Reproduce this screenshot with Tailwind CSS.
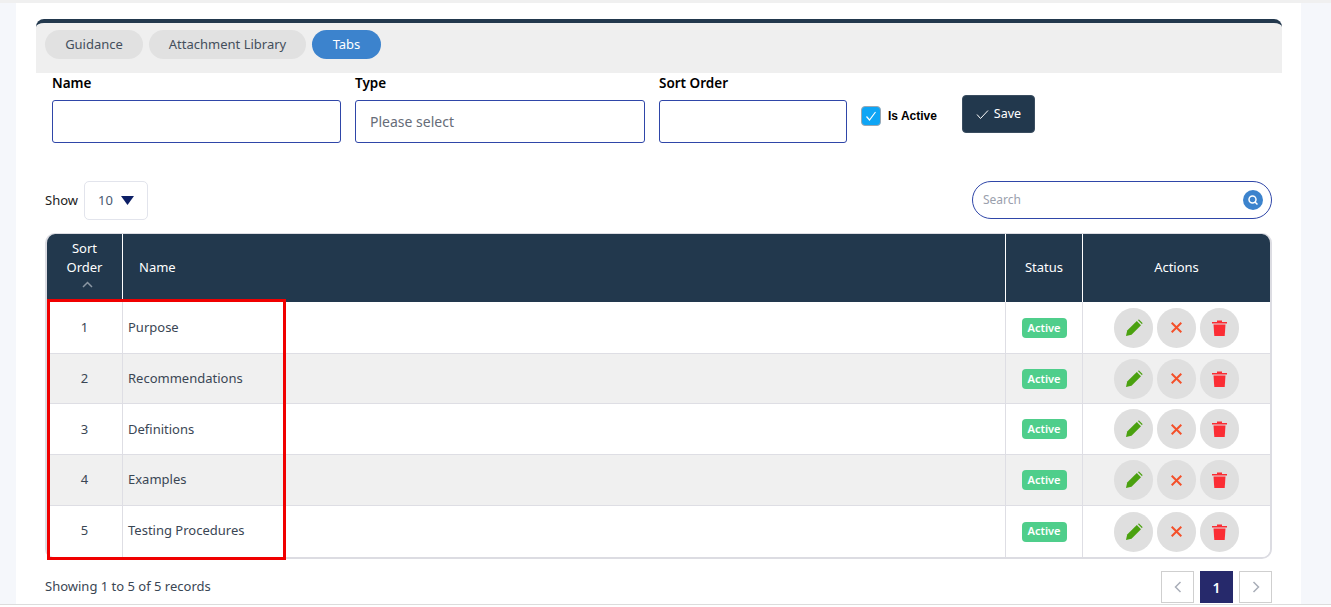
<!DOCTYPE html>
<html>
<head>
<meta charset="utf-8">
<script src="https://cdn.jsdelivr.net/npm/@tailwindcss/browser@4"></script>
</head>
<body class="w-[1331px] h-[607px] overflow-hidden bg-[#f5f7fb] font-['Noto_Sans','Open_Sans',sans-serif]">
<div class="h-[3px] bg-[#f0f0f0]"></div>
<main class="relative ml-4 w-[1285px] h-[601px] bg-white pt-4 border-b-0">
  <section class="mx-5 w-[1246px] h-[54px] bg-[#efefef] border-t-4 border-[#22384d] rounded-t-[8px] pt-[7px] pl-[9px] flex gap-[6px]">
    <button class="h-[29px] w-[98px] rounded-full bg-[#e1e1e1] text-[#444f5c] text-[13px]">Guidance</button>
    <button class="h-[29px] w-[157px] rounded-full bg-[#e1e1e1] text-[#444f5c] text-[13px]">Attachment Library</button>
    <button class="h-[29px] w-[69px] rounded-full bg-[#3c83cd] text-white text-[13px]">Tabs</button>
  </section>

  <form class="ml-9 flex items-start h-[108px]">
    <div class="w-[289px] mr-[14px]">
      <div class="h-[27px] text-[13.5px] leading-[20px] font-semibold text-black">Name</div>
      <div class="h-[43px] border border-[#2f46a8] rounded-[3px] bg-white"></div>
    </div>
    <div class="w-[290px] mr-[14px]">
      <div class="h-[27px] text-[13.5px] leading-[20px] font-semibold text-black">Type</div>
      <div class="h-[43px] border border-[#2f46a8] rounded-[3px] bg-white pl-[14px] flex items-center text-[14px] text-[#666c78]">Please select</div>
    </div>
    <div class="w-[188px] mr-[14px]">
      <div class="h-[27px] text-[13.5px] leading-[20px] font-semibold text-black">Sort Order</div>
      <div class="h-[43px] border border-[#2f46a8] rounded-[3px] bg-white"></div>
    </div>
    <div class="flex items-center mt-[33px]">
      <div class="w-5 h-5 rounded-[4px] bg-[#0ea5f5] border border-[#9aa7b3] flex items-center justify-center">
        <svg width="12" height="12" viewBox="0 0 12 12" fill="none" stroke="white" stroke-width="1.2"><path d="M1.5 6.5 4.5 10 10.5 2"/></svg>
      </div>
      <span class="ml-[7px] font-['Liberation_Sans',sans-serif] text-[12px] font-bold text-black">Is Active</span>
    </div>
    <button type="button" class="ml-[25px] mt-[22px] w-[73px] h-[38px] rounded-[4px] bg-[#22384d] border border-[#3a4d60] text-white text-[12.5px] flex items-center justify-center gap-[5px]">
      <svg width="13" height="11" viewBox="0 0 13 11" fill="none" stroke="white" stroke-width="1"><path d="M1 5.5 4.5 9.5 12 1.5"/></svg>
      Save
    </button>
  </form>

  <div class="ml-[29px] w-[1227px] flex items-start justify-between h-[39px]">
    <div class="flex items-center text-[13px] text-[#222]">
      <span>Show</span>
      <div class="ml-[6px] w-16 h-[39px] border border-[#e2e4ec] rounded-[5px] flex items-center pl-[13px] text-[#4a5a70]">
        <span>10</span>
        <svg class="ml-2" width="13" height="9" viewBox="0 0 13 9"><path d="M0 0H13L6.5 9Z" fill="#0d1f66"/></svg>
      </div>
    </div>
    <div class="w-[300px] h-[38px] border border-[#2f46a8] rounded-full flex items-center justify-between pl-[10px] pr-[8px] text-[12px] text-[#9aa0ad]">
      <span>Search</span>
      <span class="w-5 h-5 rounded-full bg-[#3c83cd] flex items-center justify-center">
        <svg width="12" height="12" viewBox="0 0 12 12" fill="none" stroke="white" stroke-width="1.5"><circle cx="5.5" cy="5.5" r="3.5"/><path d="M8 8 10.5 10.5"/></svg>
      </span>
    </div>
  </div>

  <div class="ml-[29px] mt-[13px] w-[1227px] h-[326px] rounded-[10px] overflow-hidden border-2 border-t border-[#dcdce2] text-[13px] text-[#3a4654]">
    <div class="grid grid-cols-[76px_883px_77px_1fr] h-[68px] bg-[#22384d] text-white">
      <div class="border-r border-white flex flex-col items-center pt-[5px] leading-[19px]">
        <span>Sort</span><span>Order</span>
        <svg class="mt-[4px] ml-[6px]" width="11" height="7" viewBox="0 0 11 7" fill="none" stroke="#8b97a3" stroke-width="1.5"><path d="M1 6 5.5 1.5 10 6"/></svg>
      </div>
      <div class="border-r border-white flex items-center pl-4">Name</div>
      <div class="border-r border-white flex items-center justify-center">Status</div>
      <div class="flex items-center justify-center">Actions</div>
    </div>

    <div class="grid grid-cols-[76px_883px_77px_1fr] h-[52px] bg-white border-b border-[#dedee4]">
      <div class="border-r border-[#dedee4] flex items-center justify-center">1</div>
      <div class="border-r border-[#dedee4] flex items-center pl-[5px]">Purpose</div>
      <div class="border-r border-[#dedee4] flex items-center justify-center"><span class="w-[45px] h-5 pt-[1px] rounded-[4px] bg-[#4fce8b] text-white text-[11px] font-semibold flex items-center justify-center">Active</span></div>
      <div class="flex items-center justify-center gap-1">
        <button class="w-[39px] h-10 rounded-full bg-[#dfdfdf] flex items-center justify-center"><svg width="18" height="18" viewBox="0 0 18 18"><path d="M1 17 2.2 11.5 11.8 2 16 6.2 6.5 15.8Z" fill="#4aa10f"/><path d="M12.8 1 14 .5 17.5 4 17 5.2Z" fill="#4aa10f"/></svg></button>
        <button class="w-[39px] h-10 rounded-full bg-[#dfdfdf] flex items-center justify-center"><svg width="11" height="11" viewBox="0 0 11 11" stroke="#f4502a" stroke-width="2"><path d="M.7.7 10.3 10.3M10.3.7.7 10.3"/></svg></button>
        <button class="w-[39px] h-10 rounded-full bg-[#dfdfdf] flex items-center justify-center"><svg width="15" height="16" viewBox="0 0 15 16" fill="#fb2d34"><path d="M1.5 4.5H13.5L12.7 16H2.3Z"/><path d="M0 2H5V.5H10V2H15V3.4H0Z"/></svg></button>
      </div>
    </div>
    <div class="grid grid-cols-[76px_883px_77px_1fr] h-[50px] bg-[#f0f0f0] border-b border-[#dedee4]">
      <div class="border-r border-[#dedee4] flex items-center justify-center">2</div>
      <div class="border-r border-[#dedee4] flex items-center pl-[5px]">Recommendations</div>
      <div class="border-r border-[#dedee4] flex items-center justify-center"><span class="w-[45px] h-5 pt-[1px] rounded-[4px] bg-[#4fce8b] text-white text-[11px] font-semibold flex items-center justify-center">Active</span></div>
      <div class="flex items-center justify-center gap-1">
        <button class="w-[39px] h-10 rounded-full bg-[#dfdfdf] flex items-center justify-center"><svg width="18" height="18" viewBox="0 0 18 18"><path d="M1 17 2.2 11.5 11.8 2 16 6.2 6.5 15.8Z" fill="#4aa10f"/><path d="M12.8 1 14 .5 17.5 4 17 5.2Z" fill="#4aa10f"/></svg></button>
        <button class="w-[39px] h-10 rounded-full bg-[#dfdfdf] flex items-center justify-center"><svg width="11" height="11" viewBox="0 0 11 11" stroke="#f4502a" stroke-width="2"><path d="M.7.7 10.3 10.3M10.3.7.7 10.3"/></svg></button>
        <button class="w-[39px] h-10 rounded-full bg-[#dfdfdf] flex items-center justify-center"><svg width="15" height="16" viewBox="0 0 15 16" fill="#fb2d34"><path d="M1.5 4.5H13.5L12.7 16H2.3Z"/><path d="M0 2H5V.5H10V2H15V3.4H0Z"/></svg></button>
      </div>
    </div>
    <div class="grid grid-cols-[76px_883px_77px_1fr] h-[51px] bg-white border-b border-[#dedee4]">
      <div class="border-r border-[#dedee4] flex items-center justify-center pt-[1px]">3</div>
      <div class="border-r border-[#dedee4] flex items-center pl-[5px] pt-[1px]">Definitions</div>
      <div class="border-r border-[#dedee4] flex items-center justify-center"><span class="w-[45px] h-5 pt-[1px] rounded-[4px] bg-[#4fce8b] text-white text-[11px] font-semibold flex items-center justify-center">Active</span></div>
      <div class="flex items-center justify-center gap-1">
        <button class="w-[39px] h-10 rounded-full bg-[#dfdfdf] flex items-center justify-center"><svg width="18" height="18" viewBox="0 0 18 18"><path d="M1 17 2.2 11.5 11.8 2 16 6.2 6.5 15.8Z" fill="#4aa10f"/><path d="M12.8 1 14 .5 17.5 4 17 5.2Z" fill="#4aa10f"/></svg></button>
        <button class="w-[39px] h-10 rounded-full bg-[#dfdfdf] flex items-center justify-center"><svg width="11" height="11" viewBox="0 0 11 11" stroke="#f4502a" stroke-width="2"><path d="M.7.7 10.3 10.3M10.3.7.7 10.3"/></svg></button>
        <button class="w-[39px] h-10 rounded-full bg-[#dfdfdf] flex items-center justify-center"><svg width="15" height="16" viewBox="0 0 15 16" fill="#fb2d34"><path d="M1.5 4.5H13.5L12.7 16H2.3Z"/><path d="M0 2H5V.5H10V2H15V3.4H0Z"/></svg></button>
      </div>
    </div>
    <div class="grid grid-cols-[76px_883px_77px_1fr] h-[51px] bg-[#f0f0f0] border-b border-[#dedee4]">
      <div class="border-r border-[#dedee4] flex items-center justify-center pb-[1px]">4</div>
      <div class="border-r border-[#dedee4] flex items-center pl-[5px] pb-[1px]">Examples</div>
      <div class="border-r border-[#dedee4] flex items-center justify-center"><span class="w-[45px] h-5 rounded-[4px] bg-[#4fce8b] text-white text-[11px] font-semibold flex items-center justify-center">Active</span></div>
      <div class="flex items-center justify-center gap-1">
        <button class="w-[39px] h-10 rounded-full bg-[#dfdfdf] flex items-center justify-center"><svg width="18" height="18" viewBox="0 0 18 18"><path d="M1 17 2.2 11.5 11.8 2 16 6.2 6.5 15.8Z" fill="#4aa10f"/><path d="M12.8 1 14 .5 17.5 4 17 5.2Z" fill="#4aa10f"/></svg></button>
        <button class="w-[39px] h-10 rounded-full bg-[#dfdfdf] flex items-center justify-center"><svg width="11" height="11" viewBox="0 0 11 11" stroke="#f4502a" stroke-width="2"><path d="M.7.7 10.3 10.3M10.3.7.7 10.3"/></svg></button>
        <button class="w-[39px] h-10 rounded-full bg-[#dfdfdf] flex items-center justify-center"><svg width="15" height="16" viewBox="0 0 15 16" fill="#fb2d34"><path d="M1.5 4.5H13.5L12.7 16H2.3Z"/><path d="M0 2H5V.5H10V2H15V3.4H0Z"/></svg></button>
      </div>
    </div>
    <div class="grid grid-cols-[76px_883px_77px_1fr] h-[51px] bg-white">
      <div class="border-r border-[#dedee4] flex items-center justify-center pb-[1px]">5</div>
      <div class="border-r border-[#dedee4] flex items-center pl-[5px] pb-[1px]">Testing Procedures</div>
      <div class="border-r border-[#dedee4] flex items-center justify-center"><span class="w-[45px] h-5 rounded-[4px] bg-[#4fce8b] text-white text-[11px] font-semibold flex items-center justify-center">Active</span></div>
      <div class="flex items-center justify-center gap-1">
        <button class="w-[39px] h-10 rounded-full bg-[#dfdfdf] flex items-center justify-center"><svg width="18" height="18" viewBox="0 0 18 18"><path d="M1 17 2.2 11.5 11.8 2 16 6.2 6.5 15.8Z" fill="#4aa10f"/><path d="M12.8 1 14 .5 17.5 4 17 5.2Z" fill="#4aa10f"/></svg></button>
        <button class="w-[39px] h-10 rounded-full bg-[#dfdfdf] flex items-center justify-center"><svg width="11" height="11" viewBox="0 0 11 11" stroke="#f4502a" stroke-width="2"><path d="M.7.7 10.3 10.3M10.3.7.7 10.3"/></svg></button>
        <button class="w-[39px] h-10 rounded-full bg-[#dfdfdf] flex items-center justify-center"><svg width="15" height="16" viewBox="0 0 15 16" fill="#fb2d34"><path d="M1.5 4.5H13.5L12.7 16H2.3Z"/><path d="M0 2H5V.5H10V2H15V3.4H0Z"/></svg></button>
      </div>
    </div>
  </div>

  <div class="ml-[29px] mt-[12px] w-[1227px] flex items-start justify-between">
    <span class="mt-[5px] text-[13px] leading-[20px] text-[#3a4654]">Showing 1 to 5 of 5 records</span>
    <div class="flex gap-[6px]">
      <div class="w-[33px] h-8 border border-[#cfcfcf] flex items-center justify-center"><svg width="8" height="12" viewBox="0 0 8 12" fill="none" stroke="#a9aeb8" stroke-width="1.5"><path d="M6.5 1 1.5 6 6.5 11"/></svg></div>
      <div class="w-[33px] h-8 bg-[#26296b] text-white text-[14px] font-semibold flex items-center justify-center">1</div>
      <div class="w-[33px] h-8 border border-[#cfcfcf] flex items-center justify-center"><svg width="8" height="12" viewBox="0 0 8 12" fill="none" stroke="#a9aeb8" stroke-width="1.5"><path d="M1.5 1 6.5 6 1.5 11"/></svg></div>
    </div>
  </div>

  <div class="absolute left-[31px] top-[296px] w-[239px] h-[261px] border-[3px] border-[#f00000] pointer-events-none"></div>
</main>
<div class="h-[3px] bg-white border-t border-[#dcdcdc]"></div>
</body>
</html>
